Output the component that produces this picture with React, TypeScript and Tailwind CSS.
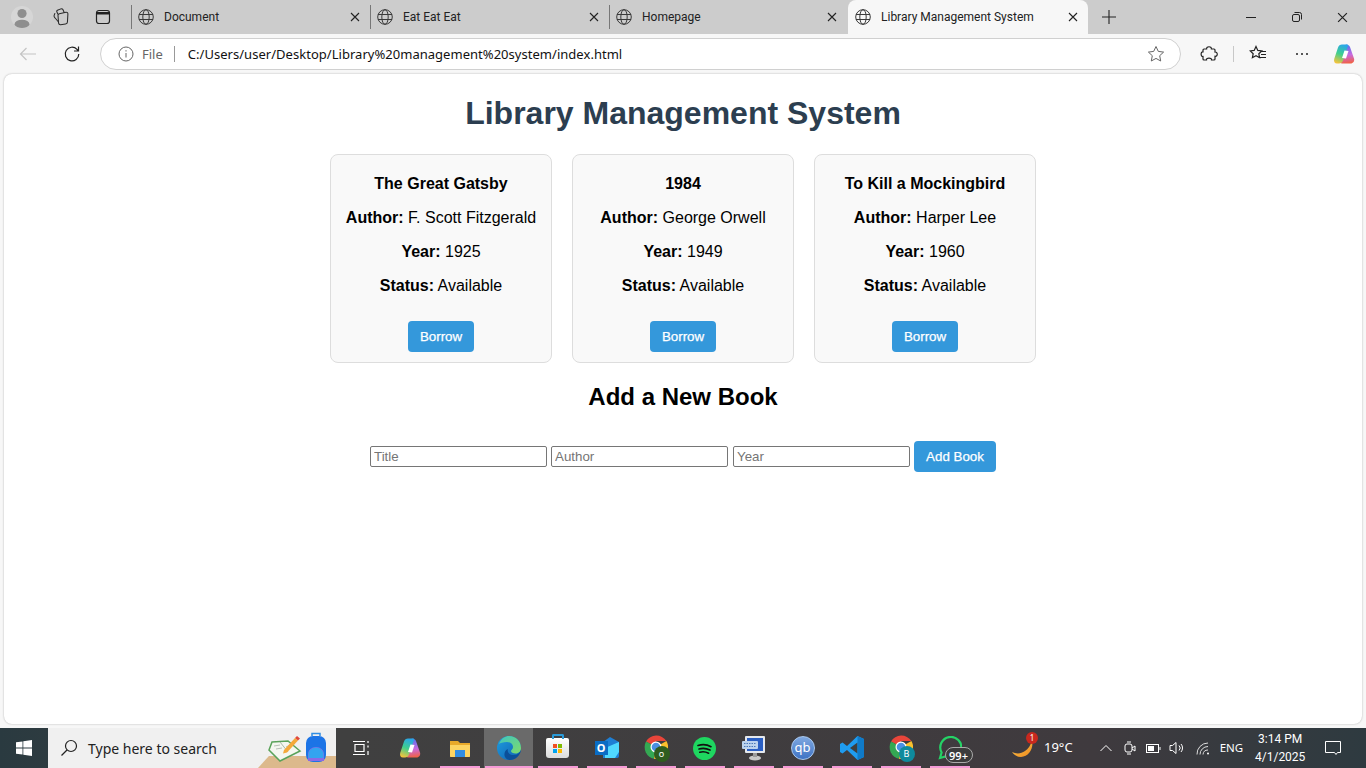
import type { ReactNode } from 'react';

const books = [
    { title: 'The Great Gatsby', author: 'F. Scott Fitzgerald', year: 1925 },
    { title: '1984', author: 'George Orwell', year: 1949 },
    { title: 'To Kill a Mockingbird', author: 'Harper Lee', year: 1960 },
];

function Globe() {
    return (
        <svg width="16" height="16" viewBox="0 0 16 16" fill="none" stroke="#3a3a3a" strokeWidth="1" className="shrink-0">
            <circle cx="8" cy="8" r="7.3" />
            <ellipse cx="8" cy="8" rx="3.2" ry="7.3" />
            <path d="M1 5.5h14M1 10.5h14" />
        </svg>
    );
}

function CloseIcon({ size = 10 }: { size?: number }) {
    return (
        <svg width={size} height={size} viewBox="0 0 10 10" stroke="#222" strokeWidth="1.1" className="shrink-0">
            <path d="M1 1l8 8M9 1l-8 8" />
        </svg>
    );
}

function Tab({ title, closeGap = 'mr-[10px]' }: { title: string; closeGap?: string }) {
    return (
        <div className="flex h-[34px] w-[239px] shrink-0 items-center">
            <div className="h-[24px] w-px bg-[#777]" />
            <div className="ml-[6px] flex flex-1 items-center">
                <Globe />
                <span className="ml-[10px] flex-1 font-['Roboto',sans-serif] text-[12px] text-[#222]">{title}</span>
                <div className={closeGap}>
                    <CloseIcon />
                </div>
            </div>
        </div>
    );
}

function TabStrip() {
    return (
        <div className="flex h-[34px] items-center bg-[#cccccc]">
            <div className="flex w-[131px] shrink-0 items-center">
                <div className="ml-[11px] flex h-[22px] w-[22px] items-center justify-center overflow-hidden rounded-full bg-[#d6d6d6]">
                    <svg width="22" height="22" viewBox="0 0 22 22" fill="#8e8e8e">
                        <circle cx="11" cy="7.5" r="4.6" />
                        <ellipse cx="11" cy="18.5" rx="7.5" ry="4.8" />
                    </svg>
                </div>
                <svg width="20" height="20" viewBox="0 0 18 18" fill="none" stroke="#2a2a2a" strokeWidth="0.95" className="ml-[18px]">
                    <path d="M7.500 6l6-1.200q1.700-.2 1.700 1.500l-.4 7.200q-.1 1.700-1.700 1.800l-4.500.6q-1.500.1-1.800-1.400L6.300 7.500Q6.200 6.300 7.500 6z" />
                    <path d="M6.300 6.500L5.300 4.500q-.5-1 .5-1.500l3-1.300q1.300-.4 1.900.6l1.300 2.800" />
                    <path d="M6.800 13.500L3.500 9.700q-1-1.100-.7-2.200l.8-2" />
                </svg>
                <svg width="16" height="16" viewBox="0 0 16 16" fill="none" stroke="#222" strokeWidth="1.2" className="ml-[24px]">
                    <rect x="1.5" y="1.5" width="13" height="13" rx="2.5" />
                    <path d="M2 3.500h12v1.500H2z" fill="#222" />
                </svg>
            </div>
            <Tab title="Document" />
            <Tab title="Eat Eat Eat" />
            <Tab title="Homepage" closeGap="mr-[11px]" />
            <div className="flex h-[34px] w-[240px] shrink-0 items-center rounded-t-[8px] bg-[#f7f7f7] pl-[7px]">
                <Globe />
                <span className="ml-[10px] flex-1 font-['Roboto',sans-serif] text-[12px] text-[#222]">Library Management System</span>
                <div className="mr-[10px]">
                    <CloseIcon />
                </div>
            </div>
            <svg width="14" height="14" viewBox="0 0 14 14" stroke="#222" strokeWidth="1.1" className="ml-[14px]">
                <path d="M7 0v14M0 7h14" />
            </svg>
            <div className="ml-auto flex items-center">
                <svg width="10" height="10" viewBox="0 0 10 10" stroke="#222" className="mr-[36px]">
                    <path d="M0 5.500h10" />
                </svg>
                <svg width="10" height="10" viewBox="0 0 10 10" fill="none" stroke="#222" className="mr-[35px]">
                    <rect x="0.5" y="2.500" width="7" height="7" rx="1.500" />
                    <path d="M2.500 .5h5a2 2 0 0 1 2 2v5" />
                </svg>
                <div className="mr-[18px]">
                    <CloseIcon size={11} />
                </div>
            </div>
        </div>
    );
}

function Toolbar() {
    return (
        <div className="flex h-[40px] items-center bg-[#f7f7f7]">
            <svg width="18" height="14" viewBox="0 0 18 14" fill="none" stroke="#c4c4c4" strokeWidth="1.2" className="ml-[19px]">
                <path d="M17 7H1.500M7.500 1L1.500 7l6 6" />
            </svg>
            <svg width="18" height="18" viewBox="0 0 18 18" fill="none" stroke="#222" strokeWidth="1.2" className="ml-[26px]">
                <path d="M15.800 9a6.800 6.800 0 1 1-1.800-4.600L15.500 6M15.500 1.500V6H11" />
            </svg>
            <div className="ml-[19px] flex h-[32px] w-[1081px] items-center rounded-full border border-[#d0d0d0] bg-white">
                <svg width="16" height="16" viewBox="0 0 16 16" fill="none" stroke="#666" className="ml-[17px]">
                    <circle cx="8" cy="8" r="7" />
                    <path d="M8 7v4.500M8 4.200v1.300" />
                </svg>
                <span className="ml-[8px] mt-px text-[13px] text-[#666]">File</span>
                <div className="ml-[11px] h-[16px] w-px bg-[#999]" />
                <span className="ml-[13px] mt-px flex-1 text-[13px] tracking-[0.03px] text-[#111]">C:/Users/user/Desktop/Library%20management%20system/index.html</span>
                <svg width="18" height="18" viewBox="0 0 18 18" fill="none" stroke="#666" className="mr-[15px]">
                    <path d="M9 1.500l2.300 4.900 5.300.7-3.900 3.600 1 5.300L9 13.400l-4.700 2.600 1-5.300-3.900-3.600 5.300-.7z" />
                </svg>
            </div>
            <svg width="18" height="18" viewBox="0 0 18 18" fill="none" stroke="#222" strokeWidth="1.2" className="ml-[19px]">
                <path d="M6.600 4C6.300 1 11.700 1 11.400 4H14c.7 0 1 .3 1 1v2c3-.3 3 4.700 0 4.300V14c0 .7-.3 1-1 1h-2.500c.3-2.500-5.300-2.500-5 0H4c-.7 0-1-.3-1-1v-2.500c-2.500.3-2.500-5 0-4.700V5c0-.7.3-1 1-1z" />
            </svg>
            <div className="ml-[15px] h-[16px] w-px bg-[#c8c8c8]" />
            <svg width="18" height="18" viewBox="0 0 18 18" fill="none" stroke="#222" strokeWidth="1.2" className="ml-[15px]">
                <path d="M7 1.500l1.800 3.900 4 .5-3 2.800.8 4L7 10.700l-3.600 2 .8-4-3-2.800 4-.5zM11 6.500h6M12 9.500h5M9.500 12.500H17" />
            </svg>
            <div className="ml-[29px] flex gap-[3px]">
                <div className="h-[2px] w-[2px] rounded-full bg-[#222]" />
                <div className="h-[2px] w-[2px] rounded-full bg-[#222]" />
                <div className="h-[2px] w-[2px] rounded-full bg-[#222]" />
            </div>
            <CopilotIcon className="ml-[25px]" />
        </div>
    );
}

function CopilotIcon({ className = '' }: { className?: string }) {
    return (
        <svg width="22" height="22" viewBox="0 0 22 22" className={className}>
            <defs>
                <linearGradient id="copa" x1="0.6" y1="0" x2="0.3" y2="1">
                    <stop offset="0" stopColor="#2aa7e8" />
                    <stop offset="0.5" stopColor="#3fcf8e" />
                    <stop offset="1" stopColor="#f5c33b" />
                </linearGradient>
                <linearGradient id="copb" x1="0.5" y1="0" x2="0.6" y2="1">
                    <stop offset="0" stopColor="#4d74ee" />
                    <stop offset="0.55" stopColor="#c86ae0" />
                    <stop offset="1" stopColor="#f2603f" />
                </linearGradient>
            </defs>
            <path d="M13 1.500c2 0 3.500 1 4 2.500l4 11.500c.8 2.500-.8 5-3.500 5H9c-1.500 0-2-1-1.500-2.500L12 5c.3-1.500.5-3.500 1-3.500z" fill="url(#copb)" />
            <path d="M9 1.500h5c1 0 1.300.6 1 1.500l-5 14.500c-.6 2-2 3-4 3H4c-2.300 0-3.500-2-2.800-4.500L5 4.500C5.700 2.500 7 1.500 9 1.500z" fill="url(#copa)" />
            <path d="M11.500 7.500l4 .5-2.500 7.500-4-.5z" fill="#fff" />
        </svg>
    );
}

function BookCard({ title, author, year }: { title: string; author: string; year: number }) {
    return (
        <div className="flex h-[209px] w-[222px] flex-col items-center rounded-[8px] border border-[#dddddd] bg-[#f9f9f9] pt-[20px] text-center text-[16px] leading-[18px] text-black">
            <h3 className="font-bold">{title}</h3>
            <p className="mt-[16px]">
                <strong>Author:</strong> {author}
            </p>
            <p className="mt-[16px]">
                <strong>Year:</strong> {year}
            </p>
            <p className="mt-[16px]">
                <strong>Status:</strong> Available
            </p>
            <button className="mt-[26px] h-[31px] w-[66px] rounded-[4px] bg-[#3498db] text-[13.33px] text-white [-webkit-text-stroke:0.25px_white]">Borrow</button>
        </div>
    );
}

function Field({ placeholder, className = '' }: { placeholder: string; className?: string }) {
    return (
        <input
            placeholder={placeholder}
            className={`h-[21px] w-[177px] rounded-[2px] border border-[#767676] bg-white px-[3px] text-[13.33px] text-black placeholder:text-[#757575] ${className}`}
        />
    );
}

function Page() {
    return (
        <main className="mx-[4px] flex h-[650px] flex-col items-center rounded-[8px] bg-white font-['Liberation_Sans',Arial,sans-serif] shadow-[0_0_2px_rgba(0,0,0,0.3)]">
            <h1 className="mt-[21px] text-[32px] font-bold leading-[37px] text-[#2c3e50]">Library Management System</h1>
            <div className="mt-[22px] flex gap-[20px]">
                {books.map((book) => (
                    <BookCard key={book.title} {...book} />
                ))}
            </div>
            <h2 className="mt-[20px] text-[24px] font-bold leading-[28px] text-black">Add a New Book</h2>
            <div className="mt-[30px] flex items-center">
                <Field placeholder="Title" />
                <Field placeholder="Author" className="ml-[4px]" />
                <Field placeholder="Year" className="ml-[5px]" />
                <button className="ml-[4px] h-[31px] w-[82px] rounded-[4px] bg-[#3498db] text-[13.33px] text-white [-webkit-text-stroke:0.25px_white]">Add Book</button>
            </div>
        </main>
    );
}

function TaskApp({ children, bar = true, active = false }: { children: ReactNode; bar?: boolean; active?: boolean }) {
    return (
        <div className={`relative flex h-[40px] w-[49px] shrink-0 items-center justify-center ${active ? 'bg-[#6a6a6a]' : ''}`}>
            {children}
            {bar && <div className={`absolute bottom-0 h-[2px] bg-[#f59ad6] ${active ? 'left-px right-0' : 'left-[5px] right-[4px]'}`} />}
        </div>
    );
}

function ChromeIcon({ badge, badgeColor }: { badge: string; badgeColor: string }) {
    return (
        <div className="relative mb-[2px] h-[24px] w-[24px]">
            <svg width="24" height="24" viewBox="0 0 24 24">
                <path d="M12 12L2 6.500A12 12 0 0 1 22.400 6H12z" fill="#e8453a" />
                <path d="M2 6.500A12 12 0 0 0 10 23.800L12 12z" fill="#34a853" />
                <path d="M22.400 6A12 12 0 0 1 10 23.800L12 12z" fill="#fbc02d" />
                <circle cx="12" cy="12" r="5.500" fill="#fff" />
                <circle cx="12" cy="12" r="4.300" fill="#4a90e2" />
            </svg>
            <div className={`absolute right-[-2px] bottom-[-3px] flex h-[16px] w-[16px] items-center justify-center rounded-full text-[9px] text-white ${badgeColor}`}>{badge}</div>
        </div>
    );
}

function Taskbar() {
    return (
        <div className="flex h-[40px] items-center bg-[linear-gradient(90deg,#2a3a40_0%,#404040_25%,#3f3a3e_80%,#2e3a40_100%)] font-['Noto_Sans',sans-serif] text-white">
            <div className="flex h-[40px] w-[48px] shrink-0 items-center justify-center">
                <svg width="16" height="16" viewBox="0 0 16 16" fill="#fff">
                    <path d="M0 2.300l6.500-.9v6.200H0zM7.300 1.300L16 0v7.600H7.300zM0 8.400h6.500v6.200L0 13.700zM7.300 8.400H16V16l-8.700-1.300z" />
                </svg>
            </div>
            <div className="relative flex h-[40px] w-[288px] shrink-0 items-center overflow-hidden bg-[#f0f0f0]">
                <svg width="18" height="18" viewBox="0 0 18 18" fill="none" stroke="#222" strokeWidth="1.2" className="ml-[12px]">
                    <circle cx="11" cy="7" r="5.500" />
                    <path d="M7 11l-5.500 5.500" />
                </svg>
                <span className="ml-[10px] text-[14px] text-[#222]">Type here to search</span>
                <div className="absolute bottom-0 right-0 h-[12px] w-[78px] bg-[#dcb98c] [clip-path:polygon(14%_0,100%_0,100%_100%,0_100%)]" />
                <svg width="34" height="30" viewBox="0 0 34 30" className="absolute left-[220px] top-[5px]">
                    <path d="M4 9l16-1 12 10-20 10L1 17z" fill="#f4f7f0" stroke="#5aa35a" strokeWidth="1.500" />
                    <path d="M12 9l8 10" stroke="#a8b8a8" />
                    <path d="M6 13l6-1M8 16l6-1M18 14l4-2" stroke="#b8c0b8" />
                    <path d="M16 17L27 5l3 2.500-11 12-4 1z" fill="#f4a93a" />
                    <path d="M27 5l2-2 3 2.500-2 2z" fill="#e0483a" />
                </svg>
                <svg width="22" height="32" viewBox="0 0 22 32" className="absolute left-[257px] top-[3px]">
                    <rect x="1" y="5" width="20" height="26" rx="7" fill="#1c74e6" />
                    <path d="M7 5V2.500h8V5" fill="none" stroke="#2f8de4" strokeWidth="1.500" />
                    <path d="M3 30v-7a8 7 0 0 1 16 0v7z" fill="#8a6ae6" />
                    <path d="M3.500 27v-4a7.500 6.500 0 0 1 15 0v4z" fill="#33a4f0" />
                </svg>
            </div>
            <TaskApp bar={false}>
                <svg width="16" height="16" viewBox="0 0 16 16" fill="none" stroke="#fff" strokeWidth="1.200">
                    <path d="M0 1.500h12M0 14.500h12M2 4.500h9v7H2zM15 1v2M15 5.500v2M15 11v4" />
                </svg>
            </TaskApp>
            <TaskApp bar={false}>
                <CopilotIcon />
            </TaskApp>
            <div className="w-px shrink-0" />
            <TaskApp>
                <svg width="22" height="20" viewBox="0 0 22 20">
                    <path d="M1 3h8l2 2h10v13a1 1 0 0 1-1 1H2a1 1 0 0 1-1-1z" fill="#e8a92a" />
                    <path d="M1 7h20v11a1 1 0 0 1-1 1H2a1 1 0 0 1-1-1z" fill="#fcd462" />
                    <rect x="6" y="12" width="10" height="7" fill="#2f8de4" />
                </svg>
            </TaskApp>
            <TaskApp active>
                <svg width="24" height="24" viewBox="0 0 24 24">
                    <defs>
                        <linearGradient id="edgea" x1="0" y1="0" x2="1" y2="1">
                            <stop offset="0" stopColor="#1f9ee0" />
                            <stop offset="1" stopColor="#0f5fb0" />
                        </linearGradient>
                        <linearGradient id="edgeb" x1="0" y1="0" x2="1" y2="1">
                            <stop offset="0" stopColor="#3fc5c0" />
                            <stop offset="1" stopColor="#7edb6a" />
                        </linearGradient>
                    </defs>
                    <circle cx="12" cy="12" r="12" fill="url(#edgea)" />
                    <path d="M2 8C4 2 9 0 12 0c7 0 12 5 12 12 0 3-2 5.500-5.500 5.500-2.500 0-4.500-1-4.500-2.500 0-1 2-1.500 2-4C16 8 13 6 10 6 6 6 3 7 2 8z" fill="url(#edgeb)" />
                    <path d="M24 14c-1 6-6 10-11 10-2 0-4-1-5-3-1.500-3 0-7 3-8-1 3 1 6 6 6 3 0 6-2 7-5z" fill="#0c4f98" />
                </svg>
            </TaskApp>
            <TaskApp>
                <div className="relative flex h-[20px] w-[23px] items-center justify-center rounded-b-[3px] rounded-t-[2px] bg-gradient-to-b from-white to-[#dcdcdc]">
                    <div className="absolute top-[-4px] h-[5px] w-[12px] rounded-t-[2px] border-2 border-b-0 border-[#2a9ad8]" />
                    <div className="grid grid-cols-2 gap-px">
                        <div className="h-[4px] w-[4px] bg-[#f25022]" />
                        <div className="h-[4px] w-[4px] bg-[#7fba00]" />
                        <div className="h-[4px] w-[4px] bg-[#00a4ef]" />
                        <div className="h-[4px] w-[4px] bg-[#ffb900]" />
                    </div>
                </div>
            </TaskApp>
            <TaskApp>
                <div className="relative h-[24px] w-[24px]">
                    <svg width="24" height="24" viewBox="0 0 24 24">
                        <path d="M8 6l7-5 9 5v14a2 2 0 0 1-2 2H8z" fill="#1f7fd4" />
                        <path d="M10 12l14-6v10l-4 6H10z" fill="#50d9ff" />
                    </svg>
                    <div className="absolute left-0 top-[5px] flex h-[14px] w-[13px] items-center justify-center bg-[#0a6cc4] text-[11px] font-bold text-white">O</div>
                </div>
            </TaskApp>
            <TaskApp>
                <ChromeIcon badge="o" badgeColor="bg-[#2f5d1e]" />
            </TaskApp>
            <TaskApp>
                <svg width="23" height="23" viewBox="0 0 23 23" fill="none">
                    <circle cx="11.500" cy="11.500" r="11.500" fill="#1ed760" />
                    <path d="M5 8.500c4-1.200 9-1 13 1.200M6 12c3.500-1 7.500-.7 11 1.100M6.800 15.200c3-.8 6-.5 8.800 1" stroke="#111" strokeWidth="1.700" strokeLinecap="round" />
                </svg>
            </TaskApp>
            <TaskApp>
                <svg width="24" height="26" viewBox="0 0 24 26">
                    <rect x="3" y="1" width="20" height="17" rx="1" fill="#e4e8ee" />
                    <rect x="5" y="3" width="16" height="13" fill="#2a5fc4" />
                    <rect x="0" y="6" width="16" height="8" rx="1" fill="#bcd3ee" />
                    <path d="M2 8.500h12M2 11.500h12" stroke="#4a78b8" strokeDasharray="1.500 1" />
                    <ellipse cx="13" cy="23" rx="6" ry="2.500" fill="#c8c8c8" />
                    <rect x="11" y="18" width="4" height="4" fill="#9a9a9a" />
                </svg>
            </TaskApp>
            <TaskApp>
                <div className="flex h-[24px] w-[24px] items-center justify-center rounded-full border border-[#a9c8ee] bg-gradient-to-b from-[#7fa8e0] to-[#3f73c4] text-[13px] text-white">qb</div>
            </TaskApp>
            <TaskApp>
                <svg width="24" height="24" viewBox="0 0 24 24">
                    <path d="M17.500 0L24 3v18l-6.500 3L7 14l-4.500 3.500L0 16V8l2.500-1.500L7 10z" fill="#1f9cf0" />
                    <path d="M17.500 6.500L10 12l7.500 5.500z" fill="#3f3f3f" />
                    <path d="M17.500 0L24 3v18l-6.500 3z" fill="#0f7ac8" />
                </svg>
            </TaskApp>
            <TaskApp>
                <ChromeIcon badge="B" badgeColor="bg-[#0f8a9d]" />
            </TaskApp>
            <TaskApp>
                <div className="relative h-[24px] w-[24px]">
                    <svg width="24" height="24" viewBox="0 0 24 24" fill="none">
                        <path d="M2 22l1.600-5.500A10.500 10.500 0 1 1 7.500 20.500z" stroke="#25d366" strokeWidth="2.200" />
                    </svg>
                    <div className="absolute left-[7px] top-[11px] flex h-[16px] w-[28px] items-center justify-center rounded-full border border-[#aaa] bg-[#3c3c3c] text-[11px] font-semibold leading-none text-white">99+</div>
                </div>
            </TaskApp>
            <div className="relative ml-[37px] h-[24px] w-[24px] shrink-0">
                <svg width="24" height="24" viewBox="0 0 24 24">
                    <defs>
                        <linearGradient id="moon" x1="0" y1="0" x2="1" y2="1">
                            <stop offset="0" stopColor="#f9c74f" />
                            <stop offset="1" stopColor="#f08a1d" />
                        </linearGradient>
                    </defs>
                    <path d="M21 4c2 8-3 17-11 17-4 0-7-2-9-5 4 2 9 2 13-1 3-2 6-6 7-11z" fill="url(#moon)" />
                </svg>
                <div className="absolute right-[-3px] top-[-4px] flex h-[12px] w-[12px] items-center justify-center rounded-full bg-[#c8281e] text-[8px] text-white">1</div>
            </div>
            <span className="ml-[9px] text-[13px]">19°C</span>
            <svg width="12" height="8" viewBox="0 0 12 8" fill="none" stroke="#fff" className="ml-[27px]">
                <path d="M.5 7L6 1.500 11.500 7" />
            </svg>
            <svg width="12" height="14" viewBox="0 0 12 14" fill="none" stroke="#fff" className="ml-[12px]">
                <rect x="1" y="3" width="7" height="8" rx="2" />
                <path d="M8 7l3-2v5l-3-2M3 1h4M3 13h4" />
            </svg>
            <svg width="15" height="9" viewBox="0 0 15 9" fill="none" stroke="#fff" className="ml-[10px]">
                <rect x=".5" y=".5" width="12" height="8" />
                <rect x="2" y="2" width="6" height="5" fill="#fff" stroke="none" />
                <path d="M14 3v3" />
            </svg>
            <svg width="16" height="14" viewBox="0 0 16 14" fill="none" stroke="#fff" className="ml-[8px]">
                <path d="M1 4.500h2.500L7 1.500v11l-3.500-3H1zM10 4.500a3.500 3.500 0 0 1 0 5M12 3a6 6 0 0 1 0 8" />
            </svg>
            <svg width="14" height="13" viewBox="0 0 14 13" fill="none" stroke="#ddd" className="ml-[11px]">
                <path d="M1 12.500A11 11 0 0 1 12 1M4 12.500A8 8 0 0 1 12 4.500M7 12.500A5 5 0 0 1 12 8" />
                <circle cx="12" cy="11.500" r="1" fill="#fff" stroke="none" />
            </svg>
            <span className="ml-[10px] text-[11.500px]">ENG</span>
            <div className="ml-[10px] flex w-[54px] flex-col items-center font-['Roboto',sans-serif] text-[12px] leading-[18px]">
                <span>3:14 PM</span>
                <span>4/1/2025</span>
            </div>
            <svg width="16" height="16" viewBox="0 0 16 16" fill="none" stroke="#fff" className="ml-[18px]">
                <path d="M.5 1.500h15v11h-3l-1.500 2-1.500-2H.5z" />
            </svg>
        </div>
    );
}

export default function App() {
    return (
        <div className="flex h-[768px] w-[1366px] flex-col overflow-hidden bg-[#f7f7f7] font-['Noto_Sans',sans-serif]">
            <TabStrip />
            <Toolbar />
            <Page />
            <div className="h-[4px] shrink-0" />
            <Taskbar />
        </div>
    );
}
